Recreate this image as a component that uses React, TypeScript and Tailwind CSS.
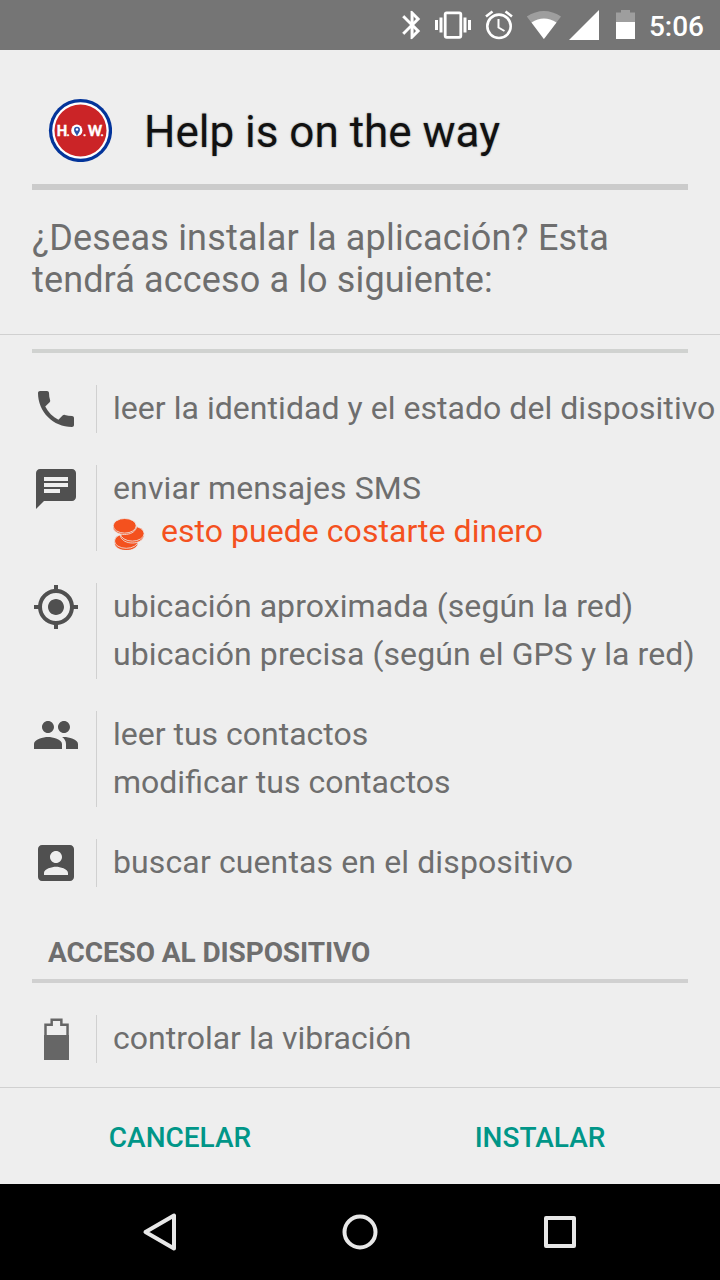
import type { ReactNode } from 'react';

// Material icon on a 24 unit grid, 48px
function Icon({ d }: { d: string }) {
  return (
    <svg viewBox="0 0 24 24" className="size-12 fill-[#505050]">
      <path d={d} />
    </svg>
  );
}

const BLUETOOTH = 'M17.71 7.71 12 2h-1v7.59L6.41 5 5 6.41 10.59 12 5 17.59 6.41 19 11 14.41V22h1l5.71-5.71-4.3-4.29 4.3-4.29zM13 5.83l1.88 1.88L13 9.59V5.83zm1.88 10.46L13 18.17v-3.76l1.88 1.88z';
const PHONE = 'M6.62 10.79c1.44 2.83 3.76 5.14 6.59 6.59l2.2-2.2c.27-.27.67-.36 1.02-.24 1.12.37 2.33.57 3.57.57.55 0 1 .45 1 1V20c0 .55-.45 1-1 1-9.39 0-17-7.61-17-17 0-.55.45-1 1-1h3.5c.55 0 1 .45 1 1 0 1.25.2 2.45.57 3.57.11.35.03.74-.25 1.02l-2.2 2.2z';
const CHAT = 'M20 2H4c-1.1 0-1.99.9-1.99 2L2 22l4-4h14c1.1 0 2-.9 2-2V4c0-1.1-.9-2-2-2zM6 9h12v2H6V9zm8 5H6v-2h8v2zm4-6H6V6h12v2z';
const LOCATION = 'M12 8c-2.21 0-4 1.79-4 4s1.79 4 4 4 4-1.79 4-4-1.79-4-4-4zm8.94 3A8.994 8.994 0 0 0 13 3.06V1h-2v2.06A8.994 8.994 0 0 0 3.06 11H1v2h2.06A8.994 8.994 0 0 0 11 20.94V23h2v-2.06A8.994 8.994 0 0 0 20.94 13H23v-2h-2.06zM12 19c-3.87 0-7-3.13-7-7s3.13-7 7-7 7 3.13 7 7-3.13 7-7 7z';
const PEOPLE = 'M16 11c1.66 0 2.99-1.34 2.99-3S17.66 5 16 5s-3 1.34-3 3 1.34 3 3 3zm-8 0c1.66 0 2.99-1.34 2.99-3S9.66 5 8 5 5 6.34 5 8s1.34 3 3 3zm0 2c-2.33 0-7 1.17-7 3.5V19h14v-2.5c0-2.33-4.67-3.5-7-3.5zm8 0c-.29 0-.62.02-.97.05 1.16.84 1.97 1.97 1.97 3.45V19h6v-2.5c0-2.33-4.67-3.5-7-3.5z';
const ACCOUNT = 'M3 5v14c0 1.1.89 2 2 2h14c1.1 0 2-.9 2-2V5c0-1.1-.9-2-2-2H5c-1.11 0-2 .9-2 2zm12 4c0 1.66-1.34 3-3 3s-3-1.34-3-3 1.34-3 3-3 3 1.34 3 3zm-9 8c0-2 4-3.1 6-3.1s6 1.1 6 3.1v1H6v-1z';

function StatusBar() {
  return (
    <header className="flex h-[50px] items-center bg-[#757575] pl-[400px] text-white">
      <svg width="320" height="50" viewBox="400 0 320 50" className="shrink-0">
        <path d={BLUETOOTH} transform="translate(395.300 8.200) scale(1.400)" fill="#fff" stroke="#fff" strokeWidth=".15" />
        <g fill="#fff">
          <rect x="435" y="20" width="3" height="10" />
          <rect x="439.500" y="17.500" width="3" height="15" />
          <rect x="463.500" y="17.500" width="3" height="15" />
          <rect x="468" y="20" width="3" height="10" />
        </g>
        <rect x="445.200" y="12.800" width="15.600" height="24.500" rx="1.500" fill="none" stroke="#fff" strokeWidth="2.800" />
        <g fill="none" stroke="#fff" strokeWidth="2.600">
          <circle cx="499" cy="26.300" r="11.700" />
          <path d="M498.500 19V27.500l6 3.500" strokeWidth="2" />
          <path d="M486 16.500 492.500 11.500M512 16.500 505.500 11.500" />
        </g>
        <path d="M526.800 16.500Q543.900 5.500 561 16.500L543.900 39Z" fill="#fff" opacity=".3" />
        <path d="M531.500 22.500Q543.900 14.500 556.500 22.500L543.900 39Z" fill="#fff" />
        <path d="M569 40 599 10V40Z" fill="#fff" />
        <path d="M616 22V12.500h5V10h9v2.500h5V22Z" fill="#fff" opacity=".3" />
        <path d="M616 22h19v17h-19Z" fill="#fff" />
        <text x="649" y="36" fill="#fff" fontSize="28" fontWeight="500" textLength="55">5:06</text>
      </svg>
    </header>
  );
}

function AppLogo() {
  return (
    <svg viewBox="0 0 64 64" className="size-16">
      <circle cx="32.500" cy="32.500" r="31.600" fill="#03349a" />
      <circle cx="32.500" cy="32.500" r="28.300" fill="#fff" />
      <circle cx="32.500" cy="32.500" r="26" fill="#cb2427" />
      <g fill="#fff" stroke="#fff" strokeWidth=".5" fontFamily="Lato, sans-serif" fontSize="15.500" fontWeight="900">
        <text x="8.800" y="38" textLength="10.500" lengthAdjust="spacingAndGlyphs">H</text>
        <text x="19" y="38" fontSize="9">.</text>
        <text x="35.500" y="38" fontSize="9">.</text>
        <text x="40" y="38" textLength="14" lengthAdjust="spacingAndGlyphs">W</text>
        <text x="53" y="38" fontSize="9">.</text>
      </g>
      <ellipse cx="28.800" cy="32.400" rx="5.600" ry="5.900" fill="#fff" />
      <path d="M29 38.500c-.8-3-3-4-3-6.700a3 3 0 0 1 6 0c0 2.700-2.200 3.700-3 6.700z" fill="#2c54ab" />
      <circle cx="29" cy="31.500" r="1.200" fill="#fff" />
    </svg>
  );
}

// stack of three coins, painted bottom to top
function Coins() {
  return (
    <svg viewBox="0 0 32 32" className="mt-1 size-8 shrink-0" fill="#f4511e" stroke="#eee" strokeWidth=".8">
      <path d="M1.500 23v3c1 4 6 6.500 11.800 6.500s10.500-2.500 11.700-6.500v-3z" />
      <ellipse cx="13.300" cy="23" rx="11.800" ry="7.300" />
      <path d="M7.500 16v2.500c1.500 4 6 6.500 11.800 6.500s10.500-2.500 11.800-7V16z" />
      <ellipse cx="19.300" cy="15.600" rx="11.800" ry="7.500" />
      <path d="M0 8v2c1 4 6 6.500 11.500 6.500S22 14 23.300 10V8z" />
      <ellipse cx="11.700" cy="7.800" rx="11.500" ry="7.300" />
    </svg>
  );
}

function Permission({ icon, children }: { icon: ReactNode; children: ReactNode }) {
  return (
    <div className="flex items-start">
      {icon}
      <div className="ml-4 border-l border-[#d0d0d0] pl-4 text-[32px] whitespace-nowrap">{children}</div>
    </div>
  );
}

export default function App() {
  return (
    <div className="flex h-[1280px] w-[720px] flex-col overflow-hidden bg-[#eeeeee] font-[Roboto,sans-serif] text-[#6e6e6e]">
      <StatusBar />

      <div className="mx-8 flex h-[140px] items-center gap-8 border-b-[6px] border-[#cbcbcb] px-4 pt-[26px]">
        <AppLogo />
        <h1 className="pt-1 text-[44px] leading-none whitespace-nowrap text-[#111] [text-shadow:0_0_2px_rgba(0,0,0,0.4)]">Help is on the way</h1>
      </div>
      <p className="h-[145px] border-b border-[#d0d0d0] px-8 pt-[27px] text-[36px] leading-[42px]">
        <span className="tracking-[0.2px]">¿Deseas instalar la aplicación? Esta</span>
        <br />
        <span className="tracking-[0.14px]">tendrá acceso a lo siguiente:</span>
      </p>

      <main className="h-[752px] shrink-0 pl-8">
        <div className="mt-[14px] mr-8 h-1 bg-[#d0d2d0]" />
        <div className="mt-8 flex flex-col gap-8">
          <Permission icon={<Icon d={PHONE} />}>
            <div className="h-12 leading-[46px] tracking-[0.04px]">leer la identidad y el estado del dispositivo</div>
          </Permission>
          <Permission icon={<Icon d={CHAT} />}>
            <div className="h-12 leading-[46px] tracking-[0.12px]">enviar mensajes SMS</div>
            <div className="flex h-[38px] items-center gap-4 text-[#f4511e]">
              <Coins />
              <span className="h-[38px] leading-[36px] tracking-[0.04px]">esto puede costarte dinero</span>
            </div>
          </Permission>
          <Permission icon={<Icon d={LOCATION} />}>
            <div className="h-12 leading-[46px] tracking-[0.07px]">ubicación aproximada (según la red)</div>
            <div className="h-12 leading-[46px] tracking-[0.09px]">ubicación precisa (según el GPS y la red)</div>
          </Permission>
          <Permission icon={<Icon d={PEOPLE} />}>
            <div className="h-12 leading-[46px]">leer tus contactos</div>
            <div className="h-12 leading-[46px]">modificar tus contactos</div>
          </Permission>
          <Permission icon={<Icon d={ACCOUNT} />}>
            <div className="h-12 leading-[46px] tracking-[0.12px]">buscar cuentas en el dispositivo</div>
          </Permission>
        </div>

        <h2 className="mt-8 mr-8 h-16 border-b-4 border-[#d0d0d0] pt-[14px] pl-4 text-[28px] leading-[40px] font-bold tracking-[-0.1px]">ACCESO AL DISPOSITIVO</h2>
        <div className="mt-8">
          <Permission
            icon={
              <svg viewBox="0 0 48 48" className="size-12">
                <path d="M13.300 44V9.300h6V4.300h9.400v5h6V44" transform="translate(-.2 .5) scale(1.030 1)" fill="none" stroke="#666" strokeWidth="2.400" />
                <path d="M12 20h25v25H12z" fill="#666" />
              </svg>
            }
          >
            <div className="h-12 leading-[46px]">controlar la vibración</div>
          </Permission>
        </div>
      </main>

      <footer className="grid h-[97px] shrink-0 grid-cols-2 border-t border-[#d0d0d0] text-[28px] font-medium text-[#009688]">
        <button className="pt-1">CANCELAR</button>
        <button className="pt-1">INSTALAR</button>
      </footer>

      <nav className="flex h-24 shrink-0 justify-center bg-black">
        <svg width="480" height="96" viewBox="120 1184 480 96" fill="none" stroke="#e8e8e8" strokeWidth="4" strokeLinejoin="round">
          <path d="M174 1215.500v33L145.500 1232z" />
          <circle cx="360" cy="1232" r="15.500" />
          <rect x="546" y="1218" width="28" height="28" />
        </svg>
      </nav>
    </div>
  );
}
